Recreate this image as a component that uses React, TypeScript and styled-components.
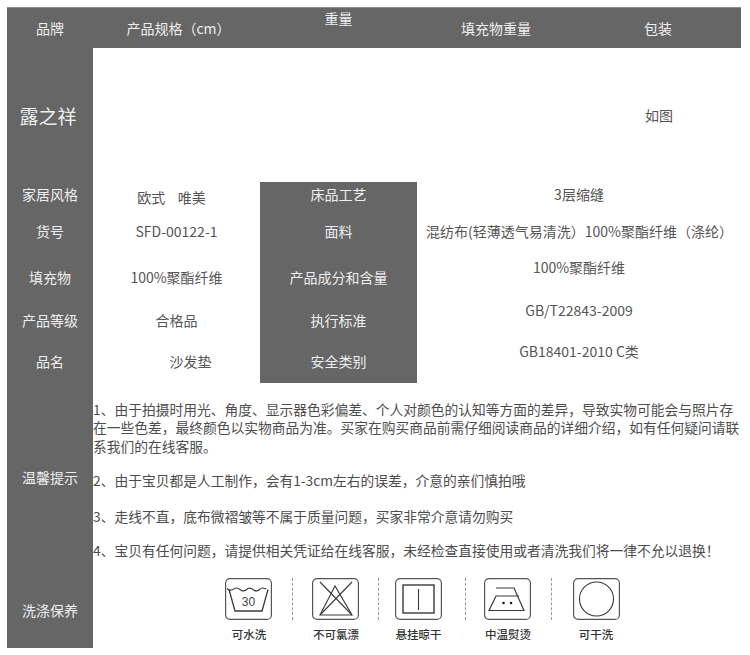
import React from "react";
import styled, { createGlobalStyle } from "styled-components";

const Global = createGlobalStyle`
  html, body { margin: 0; padding: 0; background: #fff; }
  body { font-family: "Noto Sans CJK SC", "Liberation Sans", sans-serif; }
`;

const DARK = "#666666";

const Page = styled.div`
  width: 750px;
  height: 655px;
  box-sizing: border-box;
  padding: 7px 9px 7px 7px;
  overflow: hidden;
`;
const HeaderBar = styled.div`
  display: grid;
  grid-template-columns: 86px 167px 157px 158px 166px;
  height: 41px;
  background: ${DARK};
  border-top: 1px solid #8c8c8c;
  box-sizing: border-box;
`;
const HeaderCell = styled.div<{ $raised?: boolean; $nudge?: number }>`
  display: flex;
  align-items: center;
  justify-content: center;
  color: #eeeeee;
  font-size: 14px;
  font-weight: 400;
  padding-bottom: ${(p) => (p.$raised ? 22 : 2)}px;
  padding-left: ${(p) => p.$nudge ?? 0}px;
`;
const Row = styled.div<{ $h: number }>`
  display: grid;
  grid-template-columns: 86px 167px 157px 324px;
  height: ${(p) => p.$h}px;
`;
const SideLabel = styled.div<{ $large?: boolean; $lift?: number }>`
  display: flex;
  align-items: center;
  justify-content: center;
  background: ${DARK};
  color: #eeeeee;
  font-size: ${(p) => (p.$large ? 19 : 14)}px;
  font-weight: 400;
  padding-right: ${(p) => (p.$large ? 4 : 0)}px;
  padding-bottom: ${(p) => p.$lift ?? 0}px;
`;
const HeroValue = styled.div`
  grid-column: 4;
  display: flex;
  align-items: center;
  justify-content: flex-end;
  padding-right: 68px;
  color: #555;
  font-size: 14px;
  font-weight: 400;
`;
const Value = styled.div<{ $lift?: number; $drop?: number; $left?: number; $right?: number }>`
  display: flex;
  align-items: center;
  justify-content: center;
  color: #555;
  font-size: 14px;
  font-weight: 400;
  white-space: pre;
  padding-bottom: ${(p) => p.$lift ?? 2}px;
  padding-top: ${(p) => p.$drop ?? 0}px;
  padding-left: ${(p) => p.$left ?? 0}px;
  padding-right: ${(p) => p.$right ?? 0}px;
`;
const DarkCell = styled.div<{ $lift?: number }>`
  display: flex;
  align-items: center;
  justify-content: center;
  background: ${DARK};
  color: #eeeeee;
  font-size: 14px;
  font-weight: 400;
  padding-bottom: ${(p) => p.$lift ?? 2}px;
`;
const WideRow = styled.div<{ $h: number }>`
  display: grid;
  grid-template-columns: 86px 648px;
  height: ${(p) => p.$h}px;
`;
const Notes = styled.div`
  display: flex;
  flex-direction: column;
  padding-top: 17px;
  color: #4d4d4d;
  font-size: 13.75px;
  font-weight: 400;
  line-height: 18.4px;
`;
const Note = styled.p<{ $gap?: number }>`
  margin: 0 0 ${(p) => p.$gap ?? 0}px;
`;
const CareGrid = styled.div`
  display: grid;
  grid-template-columns: 88px 86px 87px 86px 88px;
  margin-left: 112px;
  padding-top: 4px;
  align-items: start;
`;
const CareItem = styled.div`
  display: flex;
  flex-direction: column;
`;
const IconSlot = styled.div<{ $right?: number; $last?: boolean }>`
  display: flex;
  justify-content: center;
  height: 42px;
  padding-right: ${(p) => p.$right ?? 0}px;
  border-right: ${(p) => (p.$last ? "none" : "1px dashed #999")};
`;
const CareLabel = styled.div<{ $right?: number }>`
  margin-top: 6px;
  text-align: center;
  padding-right: ${(p) => p.$right ?? 0}px;
  color: #333;
  font-size: 11.5px;
  font-weight: 500;
  line-height: 16px;
`;

const Svg: React.FC<{ children: React.ReactNode }> = ({ children }) => (
  <svg width="47" height="42" viewBox="0 0 47 42" fill="none" stroke="#3a3a3a" strokeWidth="1.1">
    <rect x="0.6" y="0.6" width="45.8" height="40.8" rx="4.5" stroke="#555" strokeWidth="1.2" />
    {children}
  </svg>
);

const WashIcon = () => (
  <Svg>
    <path d="M2 10.5c2.500 2.400 4 2.400 6.500.6s4-1.800 6.500.4 4 2.200 6.500 0 4-2.200 6.500 0 4 2.200 6.500 0 3.500-1.600 7-.4" />
    <path d="M4 11.500 10 33H37L43 11.500" strokeWidth="1.300" />
    <text x="23.500" y="28" textAnchor="middle" fontSize="12" fontFamily="'Liberation Sans', sans-serif" fill="#444" stroke="none">30</text>
  </Svg>
);
const NoBleachIcon = () => (
  <Svg>
    <path d="M8 4 40 37M40 4 8 37" />
    <path d="M23 8 8 37H40Z" />
  </Svg>
);
const LineDryIcon = () => (
  <Svg>
    <rect x="8" y="7" width="31" height="28" strokeWidth="1.400" />
    <path d="M23.500 11V32" />
  </Svg>
);
const IronIcon = () => (
  <Svg>
    <path d="M12 10H30L40 32.500H5L12 18H35" strokeWidth="1.200" />
    <circle cx="19.500" cy="25" r="1.300" fill="#222" stroke="none" />
    <circle cx="27" cy="25" r="1.300" fill="#222" stroke="none" />
  </Svg>
);
const DryCleanIcon = () => (
  <Svg>
    <circle cx="23.500" cy="21" r="17" />
  </Svg>
);

const specs = [
  { h: 26, lift: 2, label: "家居风格", mid: "床品工艺", value: <Value $drop={4} $lift={0} $right={10}>欧式    唯美</Value>, right: <Value>3层缩缝</Value> },
  { h: 48, lift: 2, label: "货号", mid: "面料", value: <Value>SFD-00122-1</Value>, right: <Value $left={1}>混纺布(轻薄透气易清洗）100%聚酯纤维（涤纶）</Value> },
  { h: 44, lift: 2, label: "填充物", mid: "产品成分和含量", value: <Value>100%聚酯纤维</Value>, right: <Value $lift={22}>100%聚酯纤维</Value> },
  { h: 40, lift: 4, label: "产品等级", mid: "执行标准", value: <Value $lift={4}>合格品</Value>, right: <Value $lift={24}>GB/T22843-2009</Value> },
  { h: 43, lift: 2, label: "品名", mid: "安全类别", value: <Value $left={28}>沙发垫</Value>, right: <Value $lift={22}>GB18401-2010 C类</Value> },
];

const care = [
  { icon: <WashIcon />, label: "可水洗", right: 0 },
  { icon: <NoBleachIcon />, label: "不可氯漂", right: 0 },
  { icon: <LineDryIcon />, label: "悬挂晾干", right: 8 },
  { icon: <IronIcon />, label: "中温熨烫", right: 2 },
  { icon: <DryCleanIcon />, label: "可干洗", right: 0 },
];

export default function App() {
  return (
    <Page>
      <Global />
      <HeaderBar>
        <HeaderCell>品牌</HeaderCell>
        <HeaderCell $nudge={4}>产品规格（cm）</HeaderCell>
        <HeaderCell $raised>重量</HeaderCell>
        <HeaderCell>填充物重量</HeaderCell>
        <HeaderCell>包装</HeaderCell>
      </HeaderBar>
      <Row $h={134}>
        <SideLabel $large>露之祥</SideLabel>
        <HeroValue>如图</HeroValue>
      </Row>
      {specs.map((s) => (
        <Row key={s.label} $h={s.h}>
          <SideLabel $lift={s.lift}>{s.label}</SideLabel>
          {s.value}
          <DarkCell $lift={s.lift}>{s.mid}</DarkCell>
          {s.right}
        </Row>
      ))}
      <WideRow $h={191}>
        <SideLabel $lift={4}>温馨提示</SideLabel>
        <Notes>
          <Note $gap={16}>1、由于拍摄时用光、角度、显示器色彩偏差、个人对颜色的认知等方面的差异，导致实物可能会与照片存在一些色差，最终颜色以实物商品为准。买家在购买商品前需仔细阅读商品的详细介绍，如有任何疑问请联系我们的在线客服。</Note>
          <Note $gap={17}>2、由于宝贝都是人工制作，会有1-3cm左右的误差，介意的亲们慎拍哦</Note>
          <Note $gap={16}>3、走线不直，底布微褶皱等不属于质量问题，买家非常介意请勿购买</Note>
          <Note>4、宝贝有任何问题，请提供相关凭证给在线客服，未经检查直接使用或者清洗我们将一律不允以退换！</Note>
        </Notes>
      </WideRow>
      <WideRow $h={74}>
        <SideLabel $lift={2}>洗涤保养</SideLabel>
        <CareGrid>
          {care.map((c, i) => (
            <CareItem key={c.label}>
              <IconSlot $right={c.right} $last={i === care.length - 1}>{c.icon}</IconSlot>
              <CareLabel $right={c.right}>{c.label}</CareLabel>
            </CareItem>
          ))}
        </CareGrid>
      </WideRow>
    </Page>
  );
}
